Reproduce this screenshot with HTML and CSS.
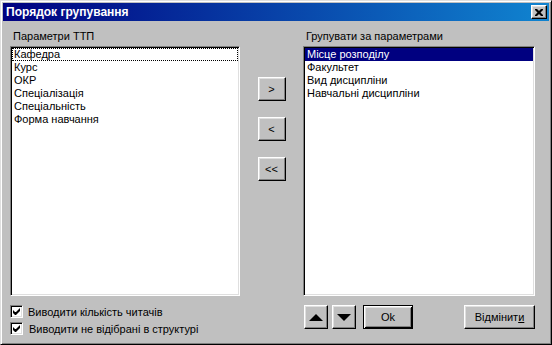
FILE: index.html
```html
<!doctype html>
<html lang="uk">
    <head>
        <title>Порядок групування</title>
        <meta charset="utf-8" />
        <link rel="stylesheet" href="styles.css">
    </head>
    <body>
        <div class="window">
            <div class="titlebar">
                <span class="title">Порядок групування</span>
                <button type="button" class="close" aria-label="Закрити">
                    <svg width="8" height="7" viewBox="0 0 8 7">
                        <path d="M0 0h2l2 2 2-2h2v1l-2.5 2.5 2.5 2.5v1h-2l-2-2-2 2h-2v-1l2.5-2.5-2.5-2.5z" fill="#000"/>
                    </svg>
                </button>
            </div>
            <div class="body">
                <div class="label">Параметри ТТП</div>
                <div></div>
                <div class="label">Групувати за параметрами</div>

                <ul class="listbox">
                    <li class="focused">Кафедра</li>
                    <li>Курс</li>
                    <li>ОКР</li>
                    <li>Спеціалізація</li>
                    <li>Спеціальність</li>
                    <li>Форма навчання</li>
                </ul>
                <div class="transfer">
                    <button type="button" class="btn">&gt;</button>
                    <button type="button" class="btn">&lt;</button>
                    <button type="button" class="btn">&lt;&lt;</button>
                </div>
                <ul class="listbox">
                    <li class="selected">Місце розподілу</li>
                    <li>Факультет</li>
                    <li>Вид дисципліни</li>
                    <li>Навчальні дисципліни</li>
                </ul>

                <div class="options">
                    <label class="check">
                        <span class="box"><svg width="7" height="7" viewBox="0 0 7 7"><path d="M0 2v3l2 2h1l4-4v-3l-4 4h-1z" fill="#000"/></svg></span>
                        Виводити кількість читачів
                    </label>
                    <label class="check wide">
                        <span class="box"><svg width="7" height="7" viewBox="0 0 7 7"><path d="M0 2v3l2 2h1l4-4v-3l-4 4h-1z" fill="#000"/></svg></span>
                        Виводити не відібрані в структурі
                    </label>
                </div>
                <div></div>
                <div class="actions">
                    <button type="button" class="btn arrow" aria-label="Вгору"><span class="tri up"></span></button>
                    <button type="button" class="btn arrow" aria-label="Вниз"><span class="tri down"></span></button>
                    <button type="button" class="btn default">Ok</button>
                    <button type="button" class="btn cancel">Відмінит<u>и</u></button>
                </div>
            </div>
        </div>
    </body>
</html>
```

FILE: styles.css
```css
body {
    margin: 0;
    font-family: "Liberation Sans", Arial, sans-serif;
    font-size: 11px;
}
.window {
    width: 552px;
    height: 345px;
    box-sizing: border-box;
    background-color: #c0c0c0;
    border: 1px solid;
    border-color: #dfdfdf #000 #000 #dfdfdf;
    box-shadow: inset 1px 1px #fff, inset -1px -1px #808080;
    padding: 2px;
}
.titlebar {
    height: 18px;
    display: flex;
    align-items: center;
    justify-content: space-between;
    padding: 0 2px 0 3px;
    background: linear-gradient(to right, #000080, #1084d0);
    color: #fff;
}
.title {
    font-weight: bold;
    font-size: 12px;
}
.close {
    width: 16px;
    height: 14px;
    padding: 0;
    display: flex;
    align-items: center;
    justify-content: center;
    background-color: #c0c0c0;
    border: 1px solid;
    border-color: #fff #000 #000 #fff;
    box-shadow: inset -1px -1px #808080, inset 1px 1px #dfdfdf;
}
.body {
    display: grid;
    grid-template-columns: 230px 63px 232px;
    grid-template-rows: 16px 250px auto;
    padding: 9px 0 0 7px;
}
.label {
    line-height: 13px;
    padding-left: 3px;
}
.listbox {
    list-style: none;
    margin: 0;
    padding: 1px;
    background-color: #fff;
    border: 1px solid;
    border-color: #808080 #fff #fff #808080;
    box-shadow: inset 1px 1px #000, inset -1px -1px #dfdfdf;
}
.listbox li {
    height: 13px;
    line-height: 13px;
    padding-left: 2px;
    box-sizing: border-box;
}
.listbox .focused {
    outline: 1px dotted #000;
    outline-offset: -1px;
}
.listbox .selected {
    background-color: #000080;
    color: #fff;
}
.btn {
    background-color: #c0c0c0;
    border: 1px solid;
    border-color: #fff #000 #000 #fff;
    box-shadow: inset -1px -1px #808080, inset 1px 1px #dfdfdf;
    font: inherit;
    color: #000;
    height: 24px;
    padding: 0;
}
.transfer {
    display: flex;
    flex-direction: column;
    align-items: center;
    gap: 16px;
    padding-top: 31px;
}
.transfer .btn {
    width: 28px;
}
.options {
    display: flex;
    flex-direction: column;
    gap: 4px;
    padding-top: 9px;
}
.check {
    display: flex;
    align-items: center;
    gap: 5px;
    height: 13px;
}
.check.wide {
    gap: 6px;
}
.box {
    width: 13px;
    height: 13px;
    box-sizing: border-box;
    display: flex;
    align-items: center;
    justify-content: center;
    background-color: #fff;
    border: 1px solid;
    border-color: #808080 #fff #fff #808080;
    box-shadow: inset 1px 1px #000, inset -1px -1px #dfdfdf;
}
.actions {
    display: flex;
    align-items: flex-start;
    padding-top: 9px;
    padding-left: 1px;
}
.arrow {
    width: 24px;
    display: flex;
    align-items: center;
    justify-content: center;
    margin-right: 4px;
}
.arrow + .arrow {
    margin-right: 7px;
}
.tri {
    width: 0;
    height: 0;
    border-left: 7px solid transparent;
    border-right: 7px solid transparent;
}
.tri.up {
    border-bottom: 7px solid #000;
}
.tri.down {
    border-top: 7px solid #000;
}
.default {
    width: 50px;
    border-color: #000;
    box-shadow: inset 1px 1px #fff, inset -1px -1px #000, inset 2px 2px #dfdfdf, inset -2px -2px #808080;
}
.cancel {
    width: 71px;
    margin-left: auto;
}
```
